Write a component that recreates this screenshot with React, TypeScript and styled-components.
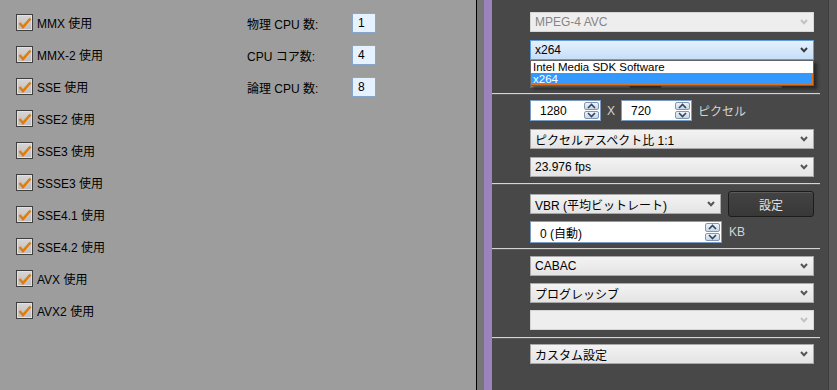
import React from 'react';
import styled, { createGlobalStyle } from 'styled-components';

const GlobalStyle = createGlobalStyle`
  html, body {
    margin: 0;
    padding: 0;
    overflow: hidden;
  }
  body {
    font-family: "Liberation Sans", "Noto Sans CJK JP", sans-serif;
    font-size: 12px;
  }
`;

const Page = styled.div`
  display: flex;
  width: 837px;
  height: 390px;
  overflow: hidden;
`;

const LeftPanel = styled.div`
  width: 477px;
  background: #9d9d9d;
  display: flex;
  align-items: flex-start;
  padding: 14px 0 0 16px;
  box-sizing: border-box;
`;

const CheckList = styled.div`
  display: flex;
  flex-direction: column;
  gap: 15px;
  width: 231px;
`;

const CheckRow = styled.label`
  display: flex;
  align-items: center;
  height: 17px;
  gap: 4px;
  color: #000;
  white-space: nowrap;
`;

const Box = styled.span`
  width: 17px;
  height: 17px;
  box-sizing: border-box;
  border: 1px solid #3f3f3f;
  box-shadow: inset 0 0 0 1px #e2e2e2;
  background: linear-gradient(#d6d6d6, #bdbdbd);
  display: flex;
  align-items: center;
  justify-content: center;
`;

const CpuList = styled.div`
  display: grid;
  grid-template-columns: 105px 24px;
  grid-auto-rows: 20px;
  row-gap: 12px;
  margin-top: -1px;
  align-items: center;
`;

const CpuLabel = styled.span`
  color: #000;
`;

const CpuValue = styled.span`
  height: 20px;
  box-sizing: border-box;
  border: 1px solid #86a6cc;
  background: #e6f2ff;
  padding-left: 5px;
  line-height: 18px;
  color: #000;
`;

const Divider = styled.div`
  display: flex;
  flex-shrink: 0;
`;

const DividerPart = styled.div<{ $w: number; $c: string }>`
  width: ${p => p.$w}px;
  background: ${p => p.$c};
`;

const RightPanel = styled.div`
  flex: 1;
  display: flex;
  background: #484848;
`;

const Content = styled.div`
  width: 336px;
  display: flex;
  flex-direction: column;
`;

const EdgeStrip = styled.div`
  width: 8px;
  border-left: 1px solid #3c3c3c;
  background: #5a5a5a;
`;

const Section = styled.div<{ $pt: number; $pb?: number; $gap?: number }>`
  display: flex;
  flex-direction: column;
  gap: ${p => p.$gap ?? 8}px;
  padding: ${p => p.$pt}px 14px ${p => p.$pb ?? 0}px 38px;
`;

const Separator = styled.div`
  height: 2px;
  margin-right: 8px;
  background: #d4d4d4;
  border-bottom: 1px solid #5a5a5a;
  box-sizing: border-box;
`;

type Variant = 'normal' | 'disabled' | 'focused';

const ComboBox = styled.div<{ $variant?: Variant; $width?: number }>`
  position: relative;
  display: flex;
  align-items: center;
  justify-content: space-between;
  height: 20px;
  width: ${p => (p.$width ? `${p.$width}px` : '100%')};
  box-sizing: border-box;
  padding: 0 5px 0 4px;
  border: 1px solid
    ${p => (p.$variant === 'focused' ? '#5d9de0' : p.$variant === 'disabled' ? '#d6d6d6' : '#a9a9a9')};
  background: ${p =>
    p.$variant === 'focused'
      ? 'linear-gradient(#e6f1fc, #c4dff9)'
      : p.$variant === 'disabled'
      ? '#eeeeee'
      : 'linear-gradient(#f3f3f3, #e4e4e4)'};
  color: ${p => (p.$variant === 'disabled' ? '#858585' : '#000')};
  white-space: nowrap;
`;

const DropList = styled.div`
  position: absolute;
  left: -1px;
  right: -1px;
  top: 19px;
  background: #fff;
  border: 1px solid #646464;
  box-shadow: 3px 3px 3px rgba(0, 0, 0, 0.45);
  z-index: 2;
`;

const DropItem = styled.div<{ $selected?: boolean }>`
  height: 12px;
  line-height: 12px;
  font-size: 11.5px;
  padding-left: 2px;
  box-sizing: border-box;
  overflow: hidden;
  color: ${p => (p.$selected ? '#fff' : '#000')};
  background: ${p => (p.$selected ? '#3399ff' : '#fff')};
  outline: ${p => (p.$selected ? '1px dotted #e0701c' : 'none')};
  outline-offset: -1px;
`;

const Row = styled.div<{ $gap?: number }>`
  display: flex;
  align-items: center;
  gap: ${p => p.$gap ?? 6}px;
`;

const HiddenButton = styled.div<{ $width: number }>`
  width: ${p => p.$width}px;
  height: 20px;
  background: #8c8c8c;
  border: 1px solid #6b6b6b;
  box-sizing: border-box;
`;

const SpinField = styled.div<{ $width: number; $height?: number }>`
  display: flex;
  align-items: center;
  justify-content: space-between;
  width: ${p => p.$width}px;
  height: ${p => p.$height ?? 21}px;
  box-sizing: border-box;
  border: 1px solid #7c9cc6;
  background: #fff;
  padding: 1px 1px 1px 9px;
  color: #000;
`;

const SpinButtons = styled.div`
  display: flex;
  flex-direction: column;
  align-self: stretch;
  width: 15px;
  gap: 1px;
`;

const SpinButton = styled.div`
  flex: 1;
  display: flex;
  align-items: center;
  justify-content: center;
  border: 1px solid #8497b0;
  border-radius: 2px;
  background: linear-gradient(#eef3f9, #c9d6e6);
`;

const LightText = styled.span`
  color: #d4d4d4;
`;

const SettingsButton = styled.div`
  width: 86px;
  height: 26px;
  box-sizing: border-box;
  margin-left: auto;
  border: 1px solid #1c1c1c;
  border-radius: 3px;
  box-shadow: inset 0 1px 0 #5a5a5a;
  background: linear-gradient(#434343, #383838);
  color: #e4e4e4;
  display: flex;
  align-items: center;
  justify-content: center;
`;

const Chevron = ({ color = '#555' }: { color?: string }) => (
  <svg width="8" height="6" viewBox="0 0 8 6">
    <path d="M1 1 L4 4.2 L7 1" fill="none" stroke={color} strokeWidth="2" />
  </svg>
);

const Arrow = ({ up }: { up?: boolean }) => (
  <svg width="9" height="6" viewBox="0 0 9 6">
    <path d={up ? 'M1 5 L4.5 1.5 L8 5' : 'M1 1 L4.5 4.5 L8 1'} fill="none" stroke="#2f4763" strokeWidth="1.6" />
  </svg>
);

const Check = () => (
  <svg width="14" height="12" viewBox="0 0 14 12">
    <path d="M1.5 6 L5 10 L12.5 1.5" fill="none" stroke="#e27a0c" strokeWidth="2.6" />
  </svg>
);

const Spinner = ({ value, width, height }: { value: string; width: number; height?: number }) => (
  <SpinField $width={width} $height={height}>
    <span>{value}</span>
    <SpinButtons>
      <SpinButton>
        <Arrow up />
      </SpinButton>
      <SpinButton>
        <Arrow />
      </SpinButton>
    </SpinButtons>
  </SpinField>
);

const Combo = ({ text, variant = 'normal', width, children }: {
  text: string;
  variant?: Variant;
  width?: number;
  children?: React.ReactNode;
}) => (
  <ComboBox $variant={variant} $width={width}>
    <span>{text}</span>
    <Chevron color={variant === 'disabled' ? '#c2c2c2' : variant === 'focused' ? '#3c3c3c' : '#555'} />
    {children}
  </ComboBox>
);

const features = [
  'MMX 使用',
  'MMX-2 使用',
  'SSE 使用',
  'SSE2 使用',
  'SSE3 使用',
  'SSSE3 使用',
  'SSE4.1 使用',
  'SSE4.2 使用',
  'AVX 使用',
  'AVX2 使用',
];

const cpuInfo = [
  ['物理 CPU 数:', '1'],
  ['CPU コア数:', '4'],
  ['論理 CPU 数:', '8'],
];

const App = () => (
  <Page>
    <GlobalStyle />
    <LeftPanel>
      <CheckList>
        {features.map(f => (
          <CheckRow key={f}>
            <Box>
              <Check />
            </Box>
            {f}
          </CheckRow>
        ))}
      </CheckList>
      <CpuList>
        {cpuInfo.map(([label, value]) => (
          <React.Fragment key={label}>
            <CpuLabel>{label}</CpuLabel>
            <CpuValue>{value}</CpuValue>
          </React.Fragment>
        ))}
      </CpuList>
    </LeftPanel>

    <Divider>
      <DividerPart $w={1} $c="#000" />
      <DividerPart $w={7} $c="#777777" />
      <DividerPart $w={8} $c="#9c83bb" />
    </Divider>

    <RightPanel>
      <Content>
        <Section $pt={12} $pb={5}>
          <Combo text="MPEG-4 AVC" variant="disabled" />
          <Combo text="x264" variant="focused">
            <DropList>
              <DropItem>Intel Media SDK Software</DropItem>
              <DropItem $selected>x264</DropItem>
            </DropList>
          </Combo>
          <Row $gap={31}>
            <HiddenButton $width={100} />
            <HiddenButton $width={121} />
          </Row>
        </Section>
        <Separator />
        <Section $pt={5} $pb={6}>
          <Row>
            <Spinner value="1280" width={71} />
            <LightText>X</LightText>
            <Spinner value="720" width={71} />
            <LightText>ピクセル</LightText>
          </Row>
          <Combo text="ピクセルアスペクト比 1:1" />
          <Combo text="23.976 fps" />
        </Section>
        <Separator />
        <Section $pt={6} $pb={5} $gap={4}>
          <Row>
            <Combo text="VBR (平均ビットレート)" width={191} />
            <SettingsButton>設定</SettingsButton>
          </Row>
          <Row $gap={7}>
            <Spinner value="0 (自動)" width={192} height={22} />
            <LightText>KB</LightText>
          </Row>
        </Section>
        <Separator />
        <Section $pt={6} $pb={7} $gap={7}>
          <Combo text="CABAC" />
          <Combo text="プログレッシブ" />
          <Combo text="" variant="disabled" />
        </Section>
        <Separator />
        <Section $pt={5}>
          <Combo text="カスタム設定" />
        </Section>
      </Content>
      <EdgeStrip />
    </RightPanel>
  </Page>
);

export default App;
